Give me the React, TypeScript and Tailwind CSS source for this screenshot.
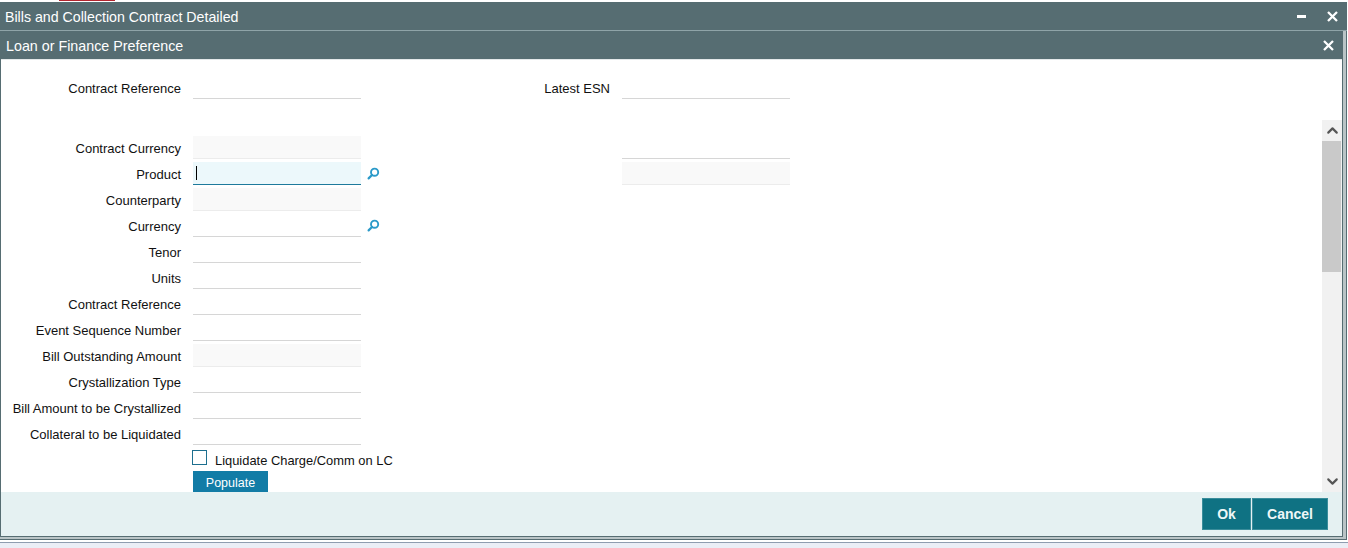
import { ChevronDown, ChevronUp } from "lucide-react";

const font = "font-['Liberation_Sans',Arial,sans-serif]";

function SearchIcon() {
  return (
    <svg width="13" height="13" viewBox="0 0 13 13" fill="none" className="shrink-0">
      <circle cx="7.6" cy="5.2" r="3.6" stroke="#2b9ac9" strokeWidth="1.9" />
      <path d="M5 8 L1.6 11.4" stroke="#2b9ac9" strokeWidth="2.2" strokeLinecap="round" />
    </svg>
  );
}

function CloseIcon() {
  return (
    <svg width="11" height="11" viewBox="0 0 11 11" fill="none" className="shrink-0">
      <path d="M1 1 L10 10 M10 1 L1 10" stroke="#fff" strokeWidth="2.3" />
    </svg>
  );
}

type FieldProps = {
  label: string;
  filled?: boolean;
  search?: boolean;
  focused?: boolean;
};

function Input({ filled, focused }: { filled?: boolean; focused?: boolean }) {
  if (focused) {
    return (
      <div className="w-[168px] h-[23px] bg-[#ecf8fb] border-b border-[#1d7a9c] flex items-center pl-[3px]">
        <div className="w-px h-[14px] bg-black" />
      </div>
    );
  }
  return (
    <div
      className={
        filled
          ? "w-[168px] h-[23px] bg-[#f9f9f9] border-b border-[#ececec]"
          : "w-[168px] h-[23px] bg-white border-b border-[#d6d6d6]"
      }
    />
  );
}

function Field({ label, filled, search, focused }: FieldProps) {
  return (
    <div className="h-[26px] flex items-start">
      <div className="w-[181px] h-[26px] flex items-center justify-end text-[13px] text-[#111]">
        {label}
      </div>
      <div className="ml-[12px]">
        <Input filled={filled} focused={focused} />
      </div>
      {search && (
        <div className="ml-[6px] h-[23px] flex items-center">
          <SearchIcon />
        </div>
      )}
    </div>
  );
}

const rows: FieldProps[] = [
  { label: "Contract Currency", filled: true },
  { label: "Product", search: true, focused: true },
  { label: "Counterparty", filled: true },
  { label: "Currency", search: true },
  { label: "Tenor" },
  { label: "Units" },
  { label: "Contract Reference" },
  { label: "Event Sequence Number" },
  { label: "Bill Outstanding Amount", filled: true },
  { label: "Crystallization Type" },
  { label: "Bill Amount to be Crystallized" },
  { label: "Collateral to be Liquidated" },
];

export default function App() {
  return (
    <div className={`${font} w-[1348px] h-[548px] bg-white overflow-hidden flex flex-col`}>
      {/* red tab sliver at the very top */}
      <div className="h-[2px] shrink-0 pl-[59px]">
        <div className="w-[56px] h-[1px] bg-[#b3262f]" />
      </div>

      {/* outer window */}
      <div className="w-[1347px] h-[538px] shrink-0 flex flex-col bg-[#566d72]">
        <div className="h-[28px] shrink-0 flex items-center justify-between pl-[5px] pr-[9px] text-white text-[14.2px]">
          <span className="pt-[3px]">Bills and Collection Contract Detailed</span>
          <div className="flex items-center gap-[21px]">
            <div className="w-[9px] h-[3px] bg-white" />
            <CloseIcon />
          </div>
        </div>
        <div className="h-px shrink-0 bg-[#8fa4a8]" />

        <div className="flex-1 min-h-0 flex items-start bg-[#b9c4c6] border-r border-b border-[#566d72]">
          {/* inner dialog */}
          <div className="w-[1343px] h-[506px] flex flex-col pl-[1px] pr-[1px] pb-[1px] bg-[#566d72]">
            <div className="h-[28px] shrink-0 flex items-center justify-between pl-[5px] pr-[8px] text-white text-[14.3px]">
              <span className="pt-[3px]">Loan or Finance Preference</span>
              <CloseIcon />
            </div>
            <div className="h-px shrink-0 bg-[#e3e8e9]" />

            <div className="flex-1 min-h-0 bg-white flex flex-col">
              {/* fixed header of the form */}
              <div className="h-[60px] shrink-0 pt-[16px] flex items-start">
                <div className="w-[180px] h-[26px] flex items-center justify-end text-[13px] text-[#111]">
                  Contract Reference
                </div>
                <div className="ml-[12px]">
                  <Input />
                </div>
                <div className="w-[249px] h-[26px] flex items-center justify-end text-[13px] text-[#111]">
                  Latest ESN
                </div>
                <div className="ml-[12px]">
                  <Input />
                </div>
              </div>

              {/* scrolling area */}
              <div className="flex-1 min-h-0 flex">
                <div className="flex-1 min-w-0 overflow-hidden pt-[16px] flex">
                  <div className="w-[622px] -ml-px">
                    {rows.map((r) => (
                      <Field key={r.label + String(r.filled)} {...r} />
                    ))}
                    <div className="flex items-start ml-[192px] mt-[2px] h-[16px]">
                      <div className="w-[15px] h-[15px] border border-[#1d6f8f] bg-white" />
                      <span className="ml-[8px] text-[12.9px] leading-[22px] text-[#111] whitespace-nowrap">
                        Liquidate Charge/Comm on LC
                      </span>
                    </div>
                    <div className="ml-[193px] mt-[5px] w-[75px] h-[22px] pt-[2px] bg-[#127ca6] text-white text-[12.5px] flex items-center justify-center">
                      Populate
                    </div>
                  </div>
                  <div className="w-[168px]">
                    <Input />
                    <div className="mt-[3px]">
                      <Input filled />
                    </div>
                  </div>
                </div>
                <div className="w-[20px] shrink-0 bg-[#f1f1f1] flex flex-col">
                  <div className="h-[21px] flex items-center justify-center">
                    <ChevronUp size={17} strokeWidth={3} className="text-[#555]" />
                  </div>
                  <div className="h-[131px] w-[19px] bg-[#c9c9c9]" />
                  <div className="flex-1" />
                  <div className="h-[21px] flex items-center justify-center">
                    <ChevronDown size={17} strokeWidth={3} className="text-[#555]" />
                  </div>
                </div>
              </div>

              {/* footer */}
              <div className="h-[44px] shrink-0 bg-[#e5f1f2] flex items-center justify-end pr-[14px] gap-px">
                <button className="w-[49px] h-[32px] bg-[#0f7283] border border-[#3a8d9b] text-[#eef7f7] text-[14px] font-bold">
                  Ok
                </button>
                <button className="w-[76px] h-[32px] bg-[#0f7283] border border-[#3a8d9b] text-[#eef7f7] text-[14px] font-bold">
                  Cancel
                </button>
              </div>
            </div>
          </div>
        </div>
      </div>

      {/* page behind the window */}
      <div className="h-[2px] shrink-0" />
      <div className="flex-1 bg-[#ebeef6] border-t border-[#8f9db0]" />
    </div>
  );
}
